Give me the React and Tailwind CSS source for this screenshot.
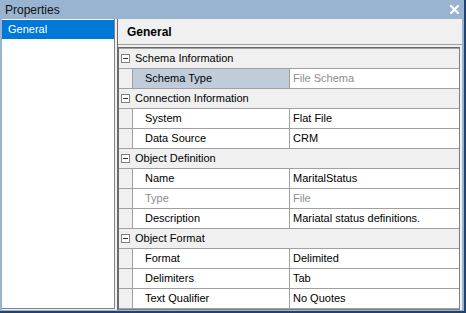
import React from 'react';

const sections = [
    {
        title: 'Schema Information',
        rows: [{ label: 'Schema Type', value: 'File Schema', selected: true, readOnly: true }],
    },
    {
        title: 'Connection Information',
        rows: [
            { label: 'System', value: 'Flat File' },
            { label: 'Data Source', value: 'CRM' },
        ],
    },
    {
        title: 'Object Definition',
        rows: [
            { label: 'Name', value: 'MaritalStatus' },
            { label: 'Type', value: 'File', disabled: true },
            { label: 'Description', value: 'Mariatal status definitions.' },
        ],
    },
    {
        title: 'Object Format',
        rows: [
            { label: 'Format', value: 'Delimited' },
            { label: 'Delimiters', value: 'Tab' },
            { label: 'Text Qualifier', value: 'No Quotes' },
        ],
    },
];

function CollapseBox() {
    return (
        <span className="w-[9px] h-[9px] border border-[#808080] bg-white flex items-center justify-center shrink-0">
            <span className="w-[5px] h-[1px] bg-[#303030]"></span>
        </span>
    );
}

export default function App() {
    return (
        <div className="w-[466px] h-[313px] flex flex-col bg-[#99b4d1] border-r-2 border-b-2 border-[#23426d] font-['Liberation_Sans',Arial,sans-serif] text-[11px] text-black select-none">
            {/* Title bar */}
            <div className="h-[19px] flex items-center justify-between pl-[5px] pr-[5px] shrink-0">
                <span className="text-[12px] text-[#111]">Properties</span>
                <svg width="9" height="9" viewBox="0 0 9 9">
                    <path d="M1 1 L8 8 M8 1 L1 8" stroke="white" strokeWidth="2.2" strokeLinecap="square" />
                </svg>
            </div>

            {/* Body */}
            <div className="flex-1 flex px-[2px] pb-[1px] min-h-0">
                <div className="flex-1 flex bg-[#f0f0f0] gap-[2px]">
                    {/* Left list */}
                    <div className="w-[113px] bg-white border-r border-b border-[#828282] mb-[1px] pt-[1px]">
                        <div className="h-[19px] flex items-center pl-[6px] bg-[#0078d7] text-white">General</div>
                    </div>

                    {/* Right pane */}
                    <div className="flex-1 flex flex-col border-l border-[#6d6d6d]">
                        <div className="h-[26px] flex items-center pl-[9px] font-bold text-[12px] border-b border-[#a0a0a0] shrink-0">
                            General
                        </div>
                        <div className="mt-[2px] mr-[2px] flex-1 border border-[#696969] border-r-[#808080] border-b-[#808080]">
                            <div className="border-t border-[#a0a0a0]">
                                {sections.map((s) => (
                                    <div key={s.title}>
                                        <div className="h-[20px] flex items-center gap-[5px] pl-[2px] bg-[#f0f0f0] border-b border-[#a0a0a0]">
                                            <CollapseBox />
                                            <span>{s.title}</span>
                                        </div>
                                        {s.rows.map((r) => (
                                            <div key={r.label} className="h-[20px] flex bg-[#f0f0f0] border-b border-[#a0a0a0]">
                                                <div className="w-[13px] shrink-0"></div>
                                                <div
                                                    className={
                                                        'w-[157px] shrink-0 flex items-center pl-[12px] border-l border-[#a0a0a0] ' +
                                                        (r.selected ? 'bg-[#bfcddb] ' : 'bg-white ') +
                                                        (r.disabled ? 'text-[#8d8d8d]' : 'text-black')
                                                    }
                                                >
                                                    {r.label}
                                                </div>
                                                <div
                                                    className={
                                                        'flex-1 flex items-center pl-[3px] bg-white border-l border-[#a0a0a0] ' +
                                                        (r.disabled || r.readOnly ? 'text-[#8d8d8d]' : 'text-black')
                                                    }
                                                >
                                                    {r.value}
                                                </div>
                                            </div>
                                        ))}
                                    </div>
                                ))}
                            </div>
                        </div>
                    </div>
                </div>
            </div>
        </div>
    );
}
